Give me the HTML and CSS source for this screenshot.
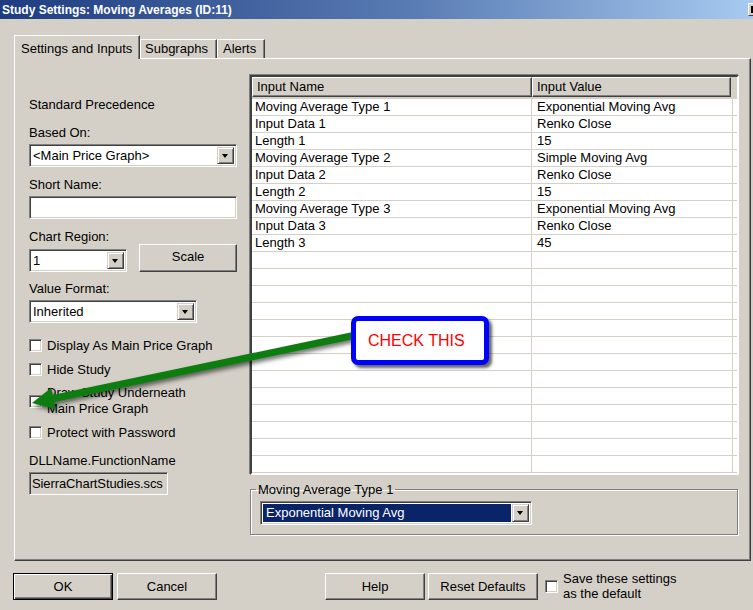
FILE: index.html
```html
<!DOCTYPE html>
<html lang="en">
<head>
    <meta charset="UTF-8">
    <title>Study Settings</title>
    <link rel="stylesheet" href="styles.css">
</head>
<body>
<div class="titlebar">
    <span class="title">Study Settings: Moving Averages (ID:11)</span>
    <span class="close"></span>
</div>

<div class="tabs">
    <div class="tab active">Settings and Inputs</div>
    <div class="tab sub">Subgraphs</div>
    <div class="tab alerts">Alerts</div>
</div>

<div class="panel">
    <div class="left">
        <div class="lbl">Standard Precedence</div>
        <div class="lbl mt13">Based On:</div>
        <div class="combo mt4 w208"><span class="val">&lt;Main Price Graph&gt;</span><span class="drop"></span></div>
        <div class="lbl mt10">Short Name:</div>
        <div class="textbox mt4 w208"></div>
        <div class="lbl mt10">Chart Region:</div>
        <div class="regionRow">
            <div class="combo w98"><span class="val">1</span><span class="drop"></span></div>
            <div class="btn scale">Scale</div>
        </div>
        <div class="lbl mt9">Value Format:</div>
        <div class="combo mt4 w168"><span class="val">Inherited</span><span class="drop"></span></div>

        <div class="check mt15"><span class="box"></span><span>Display As Main Price Graph</span></div>
        <div class="check mt9"><span class="box"></span><span>Hide Study</span></div>
        <div class="check two mt8"><span class="box"></span><span>Draw Study Underneath<br>Main Price Graph</span></div>
        <div class="check mt8"><span class="box"></span><span>Protect with Password</span></div>

        <div class="lbl mt13">DLLName.FunctionName</div>
        <div class="textbox readonly mt4">SierraChartStudies.scs</div>
    </div>

    <div class="right">
        <div class="grid">
            <div class="head">
                <div class="h1">Input Name</div>
                <div class="h2">Input Value</div>
            </div>
            <div class="row"><div class="c1">Moving Average Type 1</div><div class="c2">Exponential Moving Avg</div><div class="c3"></div></div>
            <div class="row"><div class="c1">Input Data 1</div><div class="c2">Renko Close</div><div class="c3"></div></div>
            <div class="row"><div class="c1">Length 1</div><div class="c2">15</div><div class="c3"></div></div>
            <div class="row"><div class="c1">Moving Average Type 2</div><div class="c2">Simple Moving Avg</div><div class="c3"></div></div>
            <div class="row"><div class="c1">Input Data 2</div><div class="c2">Renko Close</div><div class="c3"></div></div>
            <div class="row"><div class="c1">Length 2</div><div class="c2">15</div><div class="c3"></div></div>
            <div class="row"><div class="c1">Moving Average Type 3</div><div class="c2">Exponential Moving Avg</div><div class="c3"></div></div>
            <div class="row"><div class="c1">Input Data 3</div><div class="c2">Renko Close</div><div class="c3"></div></div>
            <div class="row"><div class="c1">Length 3</div><div class="c2">45</div><div class="c3"></div></div>
            <div class="row"><div class="c1"></div><div class="c2"></div><div class="c3"></div></div>
            <div class="row"><div class="c1"></div><div class="c2"></div><div class="c3"></div></div>
            <div class="row"><div class="c1"></div><div class="c2"></div><div class="c3"></div></div>
            <div class="row"><div class="c1"></div><div class="c2"></div><div class="c3"></div></div>
            <div class="row"><div class="c1"></div><div class="c2"></div><div class="c3"></div></div>
            <div class="row"><div class="c1"></div><div class="c2"></div><div class="c3"></div></div>
            <div class="row"><div class="c1"></div><div class="c2"></div><div class="c3"></div></div>
            <div class="row"><div class="c1"></div><div class="c2"></div><div class="c3"></div></div>
            <div class="row"><div class="c1"></div><div class="c2"></div><div class="c3"></div></div>
            <div class="row"><div class="c1"></div><div class="c2"></div><div class="c3"></div></div>
            <div class="row"><div class="c1"></div><div class="c2"></div><div class="c3"></div></div>
            <div class="row"><div class="c1"></div><div class="c2"></div><div class="c3"></div></div>
            <div class="row"><div class="c1"></div><div class="c2"></div><div class="c3"></div></div>
        </div>

        <fieldset class="group">
            <legend>Moving Average Type 1</legend>
            <div class="combo selected w272"><span class="val">Exponential Moving Avg</span><span class="drop"></span></div>
        </fieldset>
    </div>
</div>

<div class="buttons">
    <div class="btn ok">OK</div>
    <div class="btn cancel">Cancel</div>
    <div class="btn help">Help</div>
    <div class="btn reset">Reset Defaults</div>
    <span class="box savebox"></span>
    <span class="saveText">Save these settings<br>as the default</span>
</div>

<!-- annotation drawn over the dialog -->
<svg class="arrow" width="753" height="610" viewBox="0 0 753 610">
    <line x1="356" y1="335" x2="52" y2="398.8" stroke="#0d7d10" stroke-width="7"/>
    <polygon points="32,403 51.3,387.7 55.8,409.3" fill="#0d7d10"/>
</svg>
<div class="callout">CHECK THIS</div>
</body>
</html>
```

FILE: styles.css
```css
body{
    margin: 0;
    width: 753px;
    height: 610px;
    overflow: hidden;
    position: relative;
    background-color: #d4d0c8;
    font-family: "Liberation Sans", Arial, sans-serif;
    font-size: 13px;
    color: #000;
}
.titlebar{
    height: 19px;
    display: flex;
    align-items: center;
    overflow: hidden;
    background: linear-gradient(to right, #1e3c80, #5a7cb4 55%, #a6caf0);
    color: #fff;
    font-weight: bold;
    font-size: 12px;
    padding-left: 2px;
}
.close{
    margin-left: auto;
    margin-right: -11px;
    width: 16px;
    height: 13px;
    position: relative;
    background-color: #d4d0c8;
    box-sizing: border-box;
    border: 1px solid;
    border-color: #fff #404040 #404040 #fff;
}
/* the x of the close box, cut by the window edge */
.close::before{
    content: "";
    position: absolute;
    left: 2px;
    top: 2px;
    width: 2px;
    height: 7px;
    background-color: #000;
}

/* tabs */
.tabs{
    display: flex;
    align-items: flex-end;
    margin: 16px 0 0 14px;
    height: 23px;
}
.tab{
    box-sizing: border-box;
    height: 19px;
    padding-top: 0;
    line-height: 17px;
    border: 1px solid;
    border-bottom: none;
    border-color: #fff #404040 transparent #fff;
    box-shadow: inset -1px 0 #808080;
}
.tab.active{
    width: 126px;
    height: 24px;
    margin-bottom: -1px;
    padding: 4px 0 0 6px;
    position: relative;
    z-index: 1;
    background-color: #d4d0c8;
}
.tab.sub{
    width: 77px;
    padding-left: 4px;
}
.tab.alerts{
    width: 48px;
    padding-left: 5px;
}

/* main panel */
.panel{
    box-sizing: border-box;
    margin-left: 14px;
    width: 737px;
    height: 503px;
    display: flex;
    align-items: flex-start;
    padding: 16px 0 0 14px;
    border: 1px solid;
    border-color: #fff #404040 #404040 #fff;
    box-shadow: inset -1px -1px #808080;
}
.left{
    width: 208px;
    padding-top: 22px;
    display: flex;
    flex-direction: column;
    align-items: flex-start;
}
.lbl{
    line-height: 15px;
    white-space: nowrap;
}
.mt4{ margin-top: 4px; }
.mt8{ margin-top: 8px; }
.mt9{ margin-top: 9px; }
.mt10{ margin-top: 10px; }
.mt13{ margin-top: 13px; }
.mt15{ margin-top: 15px; }
.w98{ width: 98px; }
.w168{ width: 168px; }
.w208{ width: 208px; }
.w272{ width: 272px; }

/* combo boxes and edits */
.combo, .textbox{
    box-sizing: border-box;
    height: 23px;
    display: flex;
    background-color: #fff;
    border: 1px solid;
    border-color: #808080 #fff #fff #808080;
    box-shadow: inset 1px 1px #404040, inset -1px -1px #d4d0c8;
    padding: 2px;
}
.combo .val{
    flex: 1;
    line-height: 17px;
    padding-left: 1px;
    white-space: nowrap;
}
.drop{
    box-sizing: border-box;
    width: 17px;
    height: 17px;
    position: relative;
    background-color: #d4d0c8;
    border: 1px solid;
    border-color: #d4d0c8 #404040 #404040 #d4d0c8;
    box-shadow: inset 1px 1px #fff, inset -1px -1px #808080;
}
.drop::after{
    content: "";
    position: absolute;
    left: 4px;
    top: 6px;
    border-left: 3.5px solid transparent;
    border-right: 3.5px solid transparent;
    border-top: 4px solid #000;
}
.combo.selected{
    height: 24px;
}
.combo.selected .val{
    background-color: #0a246a;
    color: #fff;
    padding-left: 3px;
    line-height: 18px;
    margin-right: 1px;
}
.combo.selected .drop{
    height: 18px;
}
.textbox.readonly{
    width: 139px;
    background-color: #d4d0c8;
    overflow: hidden;
    white-space: nowrap;
    line-height: 17px;
    padding-left: 2px;
    letter-spacing: -0.1px;
}

.regionRow{
    display: flex;
    align-items: flex-end;
    width: 208px;
    justify-content: space-between;
    height: 28px;
}

/* buttons */
.btn{
    box-sizing: border-box;
    height: 27px;
    text-align: center;
    line-height: 25px;
    background-color: #d4d0c8;
    border: 1px solid;
    border-color: #fff #404040 #404040 #fff;
    box-shadow: inset -1px -1px #808080;
    white-space: nowrap;
}
.btn.scale{
    width: 98px;
    height: 28px;
    line-height: 24px;
}

/* checkboxes */
.check{
    display: flex;
    align-items: center;
    line-height: 15px;
    white-space: nowrap;
}
.check.two{
    line-height: 16px;
}
.box{
    box-sizing: border-box;
    display: inline-block;
    width: 13px;
    height: 13px;
    margin-right: 5px;
    background-color: #fff;
    border: 1px solid;
    border-color: #808080 #fff #fff #808080;
    box-shadow: inset 1px 1px #404040, inset -1px -1px #d4d0c8;
    flex-shrink: 0;
}

/* input grid */
.right{
    margin-left: 13px;
    width: 489px;
}
.grid{
    box-sizing: border-box;
    width: 489px;
    background-color: #fff;
    border: 2px solid;
    border-color: #404040 #fff #fff #404040;
    box-shadow: -1px -1px #808080;
}
.head{
    display: flex;
    height: 22px;
    background-color: #d4d0c8;
}
.head div{
    box-sizing: border-box;
    height: 20px;
    line-height: 18px;
    border: 1px solid;
    border-color: #fff #404040 #404040 #fff;
    box-shadow: inset -1px -1px #808080;
    padding-left: 4px;
}
.head .h1{ width: 280px; }
.head .h2{ width: 199px; }
.row{
    display: flex;
    height: 17px;
    box-sizing: border-box;
    border-bottom: 1px solid #d4d0c8;
    line-height: 16px;
    white-space: nowrap;
}
.c1{
    width: 280px;
    box-sizing: border-box;
    border-right: 1px solid #d4d0c8;
    padding-left: 3px;
}
.c2{
    width: 201px;
    box-sizing: border-box;
    border-right: 1px solid #d4d0c8;
    padding-left: 5px;
}
.c3{
    flex: 1;
}

.group{
    box-sizing: border-box;
    margin: 7px 0 0 0;
    width: 488px;
    padding: 0 8px 9px 9px;
    border: 1px solid #808080;
    box-shadow: 1px 1px #fff, inset 1px 1px #fff;
}
.group legend{
    padding: 0 2px;
    margin-left: -4px;
    line-height: 15px;
}
.group .combo{
    margin-top: 4px;
}

/* bottom row */
.buttons{
    display: flex;
    align-items: center;
    margin: 10px 0 0 13px;
}
.ok{
    width: 100px;
    border-color: #000;
    box-shadow: inset 1px 1px #fff, inset -1px -1px #404040, inset -2px -2px #808080;
}
.cancel{
    width: 100px;
    margin-left: 4px;
}
.help{
    width: 100px;
    margin-left: 108px;
}
.reset{
    width: 110px;
    margin-left: 3px;
}
.savebox{
    margin-left: 7px;
}
.saveText{
    line-height: 15px;
}

/* annotation */
.arrow{
    position: absolute;
    left: 0;
    top: 0;
    pointer-events: none;
    filter: drop-shadow(2px 3px 2px rgba(0,0,0,0.55));
}
.callout{
    position: absolute;
    left: 351px;
    top: 316px;
    width: 138px;
    height: 49px;
    box-sizing: border-box;
    border: 5px solid #0000ff;
    border-radius: 7px;
    background-color: #fff;
    box-shadow: 3px 3px 3px rgba(0,0,0,0.6);
    color: #ff0000;
    font-size: 16px;
    line-height: 39px;
    padding-left: 12px;
}
```
